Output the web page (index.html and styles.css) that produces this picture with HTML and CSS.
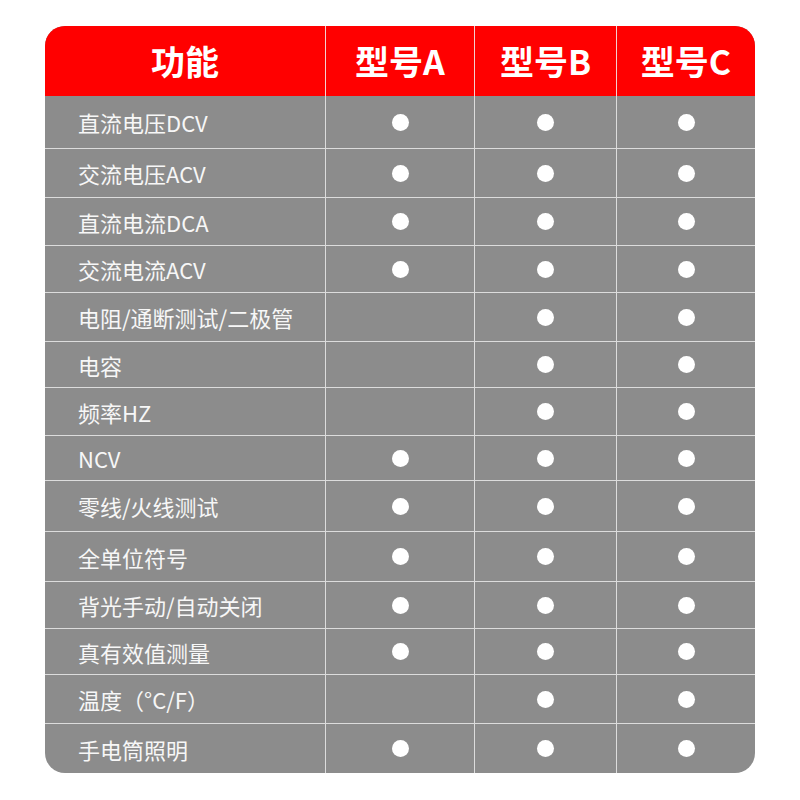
FILE: index.html
```html
<!DOCTYPE html>
<html lang="zh-CN">
<head>
<meta charset="utf-8">
<title>功能对比</title>
<link rel="stylesheet" href="styles.css">
</head>
<body>
<div class="table">
  <div class="hcell first">功能</div>
  <div class="hcell">型号A</div>
  <div class="hcell">型号B</div>
  <div class="hcell">型号C</div>

  <div class="cell label">直流电压DCV</div><div class="cell"><span class="dot"></span></div><div class="cell"><span class="dot"></span></div><div class="cell"><span class="dot"></span></div>
  <div class="cell label">交流电压ACV</div><div class="cell"><span class="dot"></span></div><div class="cell"><span class="dot"></span></div><div class="cell"><span class="dot"></span></div>
  <div class="cell label">直流电流DCA</div><div class="cell"><span class="dot"></span></div><div class="cell"><span class="dot"></span></div><div class="cell"><span class="dot"></span></div>
  <div class="cell label">交流电流ACV</div><div class="cell"><span class="dot"></span></div><div class="cell"><span class="dot"></span></div><div class="cell"><span class="dot"></span></div>
  <div class="cell label">电阻/通断测试/二极管</div><div class="cell"></div><div class="cell"><span class="dot"></span></div><div class="cell"><span class="dot"></span></div>
  <div class="cell label">电容</div><div class="cell"></div><div class="cell"><span class="dot"></span></div><div class="cell"><span class="dot"></span></div>
  <div class="cell label">频率HZ</div><div class="cell"></div><div class="cell"><span class="dot"></span></div><div class="cell"><span class="dot"></span></div>
  <div class="cell label">NCV</div><div class="cell"><span class="dot"></span></div><div class="cell"><span class="dot"></span></div><div class="cell"><span class="dot"></span></div>
  <div class="cell label">零线/火线测试</div><div class="cell"><span class="dot"></span></div><div class="cell"><span class="dot"></span></div><div class="cell"><span class="dot"></span></div>
  <div class="cell label">全单位符号</div><div class="cell"><span class="dot"></span></div><div class="cell"><span class="dot"></span></div><div class="cell"><span class="dot"></span></div>
  <div class="cell label">背光手动/自动关闭</div><div class="cell"><span class="dot"></span></div><div class="cell"><span class="dot"></span></div><div class="cell"><span class="dot"></span></div>
  <div class="cell label">真有效值测量</div><div class="cell"><span class="dot"></span></div><div class="cell"><span class="dot"></span></div><div class="cell"><span class="dot"></span></div>
  <div class="cell label">温度（°C/F）</div><div class="cell"></div><div class="cell"><span class="dot"></span></div><div class="cell"><span class="dot"></span></div>
  <div class="cell label">手电筒照明</div><div class="cell"><span class="dot"></span></div><div class="cell"><span class="dot"></span></div><div class="cell"><span class="dot"></span></div>
</div>
</body>
</html>
```
FILE: styles.css
```css
html, body {
  margin: 0;
  padding: 0;
  background: #ffffff;
}
body {
  padding: 26px 0 0 45px;
  font-family: "Noto Sans CJK SC", "Noto Sans", sans-serif;
}
.table {
  width: 710px;
  display: grid;
  grid-template-columns: 280px 149px 142px 139px;
  grid-template-rows: 70px 52px 49px 48px 47px 49px 46px 48px 45px 51px 50px 47px 46px 49px 50px;
  border-radius: 20px;
  overflow: hidden;
  background: #8c8c8c;
}
.hcell {
  box-sizing: border-box;
  background: #ff0000;
  color: #ffffff;
  font-weight: 700;
  font-size: 34px;
  display: flex;
  align-items: center;
  justify-content: center;
  border-left: 1px solid #f3d0d0;
  padding-bottom: 1px;
}
.hcell.first {
  border-left: none;
}
.cell {
  box-sizing: border-box;
  display: flex;
  align-items: center;
  justify-content: center;
  border-left: 1px solid #dcdcdc;
  border-top: 1px solid #dcdcdc;
  color: #f7f7f7;
  font-size: 22px;
}
.table > .cell:nth-child(-n+8) {
  border-top: none;
}
.cell.label {
  border-left: none;
  justify-content: flex-start;
  padding-left: 33px;
}
.dot {
  width: 17px;
  height: 17px;
  border-radius: 50%;
  background: #ffffff;
}
```
